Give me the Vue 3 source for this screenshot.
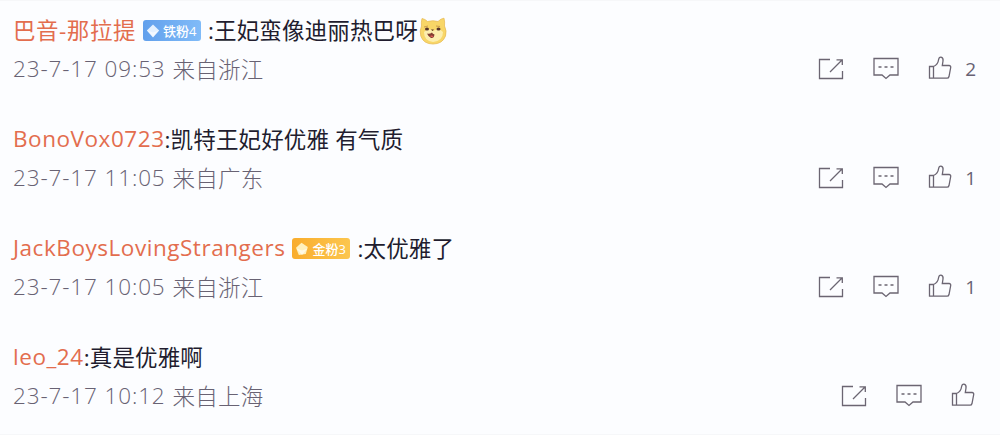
<script setup>
const comments = [
  {
    id: 1,
    name: '巴音-那拉提',
    badge: { type: 'iron', text: '铁粉4' },
    text: '王妃蛮像迪丽热巴呀',
    doge: true,
    date: '23-7-17 09:53',
    from: '来自浙江',
    likes: 2
  },
  {
    id: 2,
    name: 'BonoVox0723',
    text: '凯特王妃好优雅 有气质',
    date: '23-7-17 11:05',
    from: '来自广东',
    likes: 1
  },
  {
    id: 3,
    name: 'JackBoysLovingStrangers',
    badge: { type: 'gold', text: '金粉3' },
    text: '太优雅了',
    date: '23-7-17 10:05',
    from: '来自浙江',
    likes: 1
  },
  {
    id: 4,
    name: 'leo_24',
    text: '真是优雅啊',
    date: '23-7-17 10:12',
    from: '来自上海',
    likes: 0
  }
]
</script>

<template>
  <div class="comment-list">
    <div v-for="item in comments" :key="item.id" class="comment">
      <div class="content">
        <a class="name">{{ item.name }}</a>
        <span v-if="item.badge" class="badge" :class="item.badge.type">
          <svg width="14" height="14" viewBox="0 0 14 14">
            <path v-if="item.badge.type === 'iron'" d="M7 0.5 L13.2 6.5 L7 13.5 L0.8 6.5 Z" fill="#e4f1ff" />
            <path v-else d="M6.5 0.8 L12.8 5 L10.8 12 L3.8 13 L1 5.8 Z" fill="#fff1bd" />
            <path d="M1.5 6.5 L7 8.5 L12.5 6.5 L7 13 Z" fill="#fff" opacity="0.6" />
          </svg>
          <span>{{ item.badge.text }}</span>
        </span>
        <span class="text">:{{ item.text }}</span>
        <svg v-if="item.doge" class="doge" width="28" height="28" viewBox="0 0 28 28">
          <path
            d="M3 1.5 Q6 2 8.5 4.5 Q14 3 19 4.5 Q22 1.5 25 1.2 Q26 5 25.5 9 Q28 14 26.5 19 Q23.5 27 14 27 Q4.5 27 1.8 19 Q0.3 14 2.5 9 Q2 5 3 1.5 Z"
            fill="#f8d667"
            stroke="#e9bd58"
            stroke-width="0.8"
          />
          <path d="M5 15 Q9 10 14 14 Q20 10 24 15 Q24 24 14 25 Q5 24 5 15 Z" fill="#fceeae" />
          <path d="M5 10 L9 9 M17 9 L21 9.5" stroke="#c99a4e" stroke-width="1" />
          <ellipse cx="8" cy="12" rx="2" ry="1.6" fill="#57352b" />
          <ellipse cx="19.5" cy="12" rx="2" ry="1.6" fill="#57352b" />
          <path d="M12 12.5 H15 L13.5 14 Z" fill="#57352b" />
          <path d="M8 16.5 Q10.5 17.5 13 15.5 Q13.5 17 15.5 17.5 Q15 21.5 12 21 Q9.5 20 8 16.5 Z" fill="#843d32" />
          <path d="M11 19 Q13 18 14.2 19.2 Q12.8 21 11 19 Z" fill="#e8615d" />
        </svg>
      </div>
      <div class="info">
        <div class="source">
          <span class="date">{{ item.date }}</span>
          <span class="from">{{ item.from }}</span>
        </div>
        <div class="actions">
          <svg width="28" height="26" viewBox="0 0 28 26">
            <path d="M13 3.5 H2.5 V22.5 H25.5 V15 M13 16 L25 4 M19.5 3.8 H25.3 V9" />
          </svg>
          <svg width="28" height="26" viewBox="0 0 28 26">
            <path d="M2 2.5 H26 V19 H18 L14 22.5 L10 19 H2 Z" />
            <path d="M6.5 11 H9.5 M12.5 11 H15.5 M18.5 11 H21.5" />
          </svg>
          <svg width="26" height="26" viewBox="0 0 26 26">
            <path
              d="M2.5 10.5 H6.5 Q11 8.5 11.5 4 Q12 1 14 1.2 Q16.5 1.7 16 5 L15.3 9.5 H22 Q24 9.7 23.7 11.5 L22 20.5 Q21.6 22.2 20 22.2 H2.5 Z M6.5 10.5 V22"
            />
          </svg>
          <span v-if="item.likes" class="count">{{ item.likes }}</span>
        </div>
      </div>
    </div>
  </div>
</template>

<style>
body {
  margin: 0;
  background: #fcfdff;
}
</style>

<style scoped>
.comment-list {
  box-sizing: border-box;
  height: 435px;
  padding: 10px 24px 0 13px;
  border: solid #f6f7f9;
  border-width: 1px 0;
  overflow: hidden;
  font-family: "Open Sans", "Noto Sans CJK SC", sans-serif;
  font-size: 22.5px;
  color: #211c2e;
}
.comment {
  height: 109px;
}
.content {
  display: flex;
  align-items: center;
  height: 36px;
  white-space: nowrap;
}
.name {
  color: #e36d4e;
  letter-spacing: 0.54px;
}
.badge {
  display: flex;
  align-items: center;
  box-sizing: border-box;
  width: 58px;
  height: 21px;
  margin: 3px 7px 0 7px;
  padding-left: 3px;
  gap: 3px;
  border-radius: 3px;
  color: #fff;
  font-size: 13px;
  font-weight: 500;
  line-height: 20px;
}
.badge svg {
  flex: none;
}
.iron {
  background: linear-gradient(90deg, #62a0ec, #80bbf8);
}
.gold {
  background: linear-gradient(90deg, #f9ad2d, #fcc64e);
}
.text {
  letter-spacing: 0.15px;
}
.doge {
  margin: 3px 0 0 1px;
}
.info {
  display: flex;
  justify-content: space-between;
  align-items: center;
  height: 42px;
  color: #686273;
  font-weight: 300;
}
.source {
  display: flex;
  gap: 7px;
}
.date {
  padding-top: 1px;
  letter-spacing: 0.87px;
}
.from {
  letter-spacing: 0.2px;
}
.actions {
  display: flex;
  align-items: center;
  gap: 27px;
  padding-top: 1px;
}
.actions svg {
  fill: none;
  stroke: #6b6572;
  stroke-width: 1.3;
}
.count {
  margin-left: -15px;
  font-size: 19px;
  font-weight: 400;
}
</style>
